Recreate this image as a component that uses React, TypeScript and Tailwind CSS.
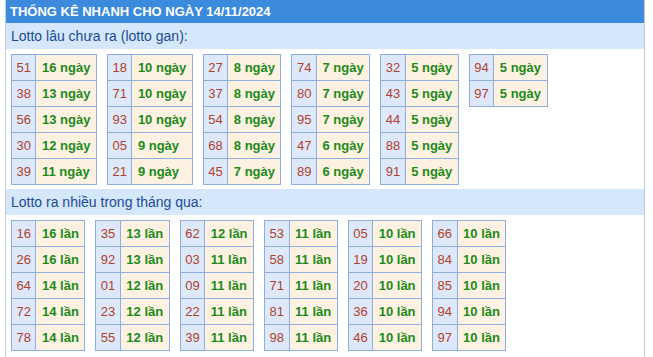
const gan: [string, string][][] = [
  [['51', '16'], ['38', '13'], ['56', '13'], ['30', '12'], ['39', '11']],
  [['18', '10'], ['71', '10'], ['93', '10'], ['05', '9'], ['21', '9']],
  [['27', '8'], ['37', '8'], ['54', '8'], ['68', '8'], ['45', '7']],
  [['74', '7'], ['80', '7'], ['95', '7'], ['47', '6'], ['89', '6']],
  [['32', '5'], ['43', '5'], ['44', '5'], ['88', '5'], ['91', '5']],
  [['94', '5'], ['97', '5']],
];

const nhieu: [string, string][][] = [
  [['16', '16'], ['26', '16'], ['64', '14'], ['72', '14'], ['78', '14']],
  [['35', '13'], ['92', '13'], ['01', '12'], ['23', '12'], ['55', '12']],
  [['62', '12'], ['03', '11'], ['09', '11'], ['22', '11'], ['39', '11']],
  [['53', '11'], ['58', '11'], ['71', '11'], ['81', '11'], ['98', '11']],
  [['05', '10'], ['19', '10'], ['20', '10'], ['36', '10'], ['46', '10']],
  [['66', '10'], ['84', '10'], ['85', '10'], ['94', '10'], ['97', '10']],
];

function LottoTable({ rows, unit }: { rows: [string, string][]; unit: string }) {
  return (
    <table className="self-start border-collapse text-[13px]">
      <tbody>
        {rows.map(([num, count]) => (
          <tr key={num} className="h-[26px]">
            <td className="border border-[#8eaee0] bg-[#dde9fb] px-[4.5px] text-center text-[#b0412a]">{num}</td>
            <td className="border border-[#8eaee0] bg-[#fdf2e2] px-[5.5px] font-bold text-[#1c8a1a]">
              {count} {unit}
            </td>
          </tr>
        ))}
      </tbody>
    </table>
  );
}

function Section({ title, tables, unit }: { title: string; tables: [string, string][][]; unit: string }) {
  return (
    <div>
      <div className="flex h-[26px] items-center bg-[#d4e7fb] pl-[5px] text-[14px] text-[#1c4a98]">{title}</div>
      <div className="flex flex-wrap gap-x-[10px] pt-[5px] pb-[4px] pl-[5px]">
        {tables.map((rows, i) => (
          <LottoTable key={i} rows={rows} unit={unit} />
        ))}
      </div>
    </div>
  );
}

export default function App() {
  return (
    <div className="h-[357px] w-[653px] bg-white pl-[5px] font-['Liberation_Sans',Arial,sans-serif]">
      <div className="h-full w-[640px] border-x border-[#c8ccd4]">
        <div className="flex h-[23px] items-center bg-[#3c8ade] pl-[4px] text-[13px] font-bold text-white">
          THỐNG KÊ NHANH CHO NGÀY 14/11/2024
        </div>
        <Section title="Lotto lâu chưa ra (lotto gan):" tables={gan} unit="ngày" />
        <Section title="Lotto ra nhiều trong tháng qua:" tables={nhieu} unit="lần" />
      </div>
    </div>
  );
}
